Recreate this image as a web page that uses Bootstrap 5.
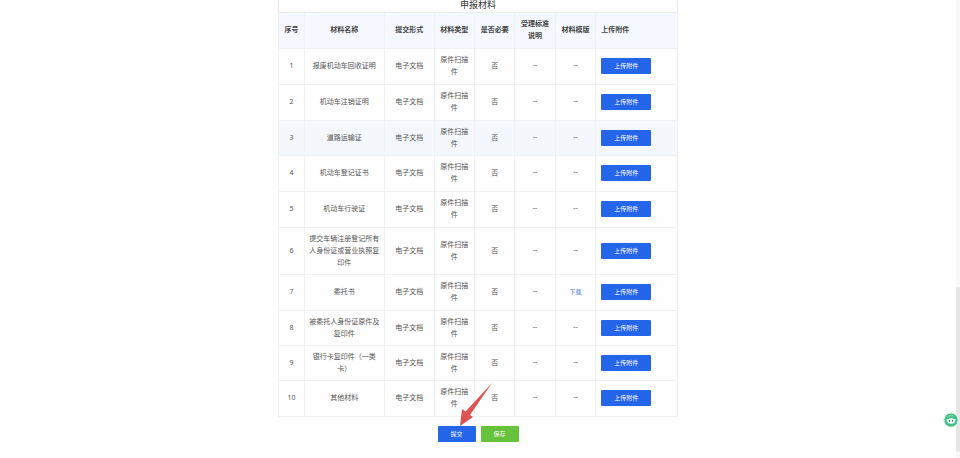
<!DOCTYPE html>
<html lang="zh-CN">
<head>
<meta charset="utf-8">
<meta name="viewport" content="width=device-width, initial-scale=1">
<title>申报材料</title>
<link href="https://cdn.jsdelivr.net/npm/bootstrap@5.3.0/dist/css/bootstrap.min.css" rel="stylesheet">
<style>
  body { font-family: "Noto Sans", "Noto Sans CJK SC", sans-serif; font-size: 7px; line-height: 12px; color: #555; background: #fefefe; }
  .sheet { max-width: 400px; }
  .sheet-title { font-family: "Noto Sans CJK SC", sans-serif; font-size: 9px; line-height: 10px; padding-bottom: 2px; color: #333; border: 1px solid #ececec; border-top: 0; }
  .materials { table-layout: fixed; --bs-table-bg: transparent; --bs-table-color: #555; border-color: #f0f1f3; }
  .materials > :not(caption) > * > * { padding: 5px 4px; border-width: 0 1px 1px 0; }
  .materials > * > tr > :first-child { border-left-width: 1px; }
  .materials tr { height: 36px; border-width: 0; }
  .materials thead tr, .materials tbody tr:nth-child(3n), .materials tbody tr:nth-child(8) { height: 35px; }
  .materials thead th { background: #f5f9ff; color: #444; padding-left: 2px; padding-right: 2px; }
  .materials tr.is-hover td { background: #f4f8fd; }
  .c-no { width: 6.5%; } .c-name { width: 20%; } .c-form { width: 12.5%; } .c-std { width: 10.125%; }
  .none-mark { font-family: Roboto, sans-serif; font-size: 8px; }
  .btn-mini { --bs-btn-font-size: 6px; --bs-btn-line-height: 12px; --bs-btn-padding-x: 12px; --bs-btn-padding-y: 2px; --bs-btn-border-width: 0; --bs-btn-border-radius: 1px; --bs-btn-color: #fff; --bs-btn-hover-color: #fff; display: block; line-height: 12px; }
  .btn-blue { --bs-btn-bg: #2465e9; --bs-btn-hover-bg: #1e58d0; }
  .btn-green { --bs-btn-bg: #65c23a; --bs-btn-hover-bg: #57ab31; }
  .btn-upload { width: 50px; }
  .btn-form { width: 38px; }
  .materials > * > tr > .upload-cell { padding-left: 5px; }
  .dl { font-size: 6px; color: #3a70cc; }
  .actions { gap: 5px; padding: 9px 0 16px; }
  .pointer { left: 20px; top: -45px; pointer-events: none; }
  .track { width: 4px; background: #f7f7f7; }
  .thumb { height: 36%; margin-bottom: 6px; background: #e6e6e6; border-radius: 2px; }
  .helper { right: 1px; bottom: 30px; width: 16px; height: 16px; }
</style>
<script src="https://cdn.jsdelivr.net/npm/bootstrap@5.3.0/dist/js/bootstrap.bundle.min.js"></script>
</head>
<body class="d-flex min-vh-100">
<main class="flex-grow-1">
  <div class="sheet mx-auto">
    <h1 class="sheet-title text-center fw-normal m-0">申报材料</h1>
    <table class="materials table text-center align-middle m-0">
      <colgroup><col class="c-no"><col class="c-name"><col class="c-form"><col class="c-std"><col class="c-std"><col class="c-std"><col class="c-std"><col></colgroup>
      <thead class="align-middle">
        <tr><th>序号</th><th>材料名称</th><th>提交形式</th><th>材料类型</th><th>是否必要</th><th>受理标准<br>说明</th><th>材料模版</th><th class="upload-cell text-start">上传附件</th></tr>
      </thead>
      <tbody>
        <tr><td>1</td><td>报废机动车回收证明</td><td>电子文档</td><td>原件扫描件</td><td>否</td><td class="none-mark">--</td><td class="none-mark">--</td><td class="upload-cell"><button type="button" class="btn btn-mini btn-blue btn-upload">上传附件</button></td></tr>
        <tr><td>2</td><td>机动车注销证明</td><td>电子文档</td><td>原件扫描件</td><td>否</td><td class="none-mark">--</td><td class="none-mark">--</td><td class="upload-cell"><button type="button" class="btn btn-mini btn-blue btn-upload">上传附件</button></td></tr>
        <tr class="is-hover"><td>3</td><td>道路运输证</td><td>电子文档</td><td>原件扫描件</td><td>否</td><td class="none-mark">--</td><td class="none-mark">--</td><td class="upload-cell"><button type="button" class="btn btn-mini btn-blue btn-upload">上传附件</button></td></tr>
        <tr><td>4</td><td>机动车登记证书</td><td>电子文档</td><td>原件扫描件</td><td>否</td><td class="none-mark">--</td><td class="none-mark">--</td><td class="upload-cell"><button type="button" class="btn btn-mini btn-blue btn-upload">上传附件</button></td></tr>
        <tr><td>5</td><td>机动车行驶证</td><td>电子文档</td><td>原件扫描件</td><td>否</td><td class="none-mark">--</td><td class="none-mark">--</td><td class="upload-cell"><button type="button" class="btn btn-mini btn-blue btn-upload">上传附件</button></td></tr>
        <tr><td>6</td><td>提交车辆注册登记所有人身份证或营业执照复印件</td><td>电子文档</td><td>原件扫描件</td><td>否</td><td class="none-mark">--</td><td class="none-mark">--</td><td class="upload-cell"><button type="button" class="btn btn-mini btn-blue btn-upload">上传附件</button></td></tr>
        <tr><td>7</td><td>委托书</td><td>电子文档</td><td>原件扫描件</td><td>否</td><td class="none-mark">--</td><td><a class="dl text-decoration-none" href="#">下载</a></td><td class="upload-cell"><button type="button" class="btn btn-mini btn-blue btn-upload">上传附件</button></td></tr>
        <tr><td>8</td><td>被委托人身份证原件及复印件</td><td>电子文档</td><td>原件扫描件</td><td>否</td><td class="none-mark">--</td><td class="none-mark">--</td><td class="upload-cell"><button type="button" class="btn btn-mini btn-blue btn-upload">上传附件</button></td></tr>
        <tr><td>9</td><td>银行卡复印件（一类卡）</td><td>电子文档</td><td>原件扫描件</td><td>否</td><td class="none-mark">--</td><td class="none-mark">--</td><td class="upload-cell"><button type="button" class="btn btn-mini btn-blue btn-upload">上传附件</button></td></tr>
        <tr><td>10</td><td>其他材料</td><td>电子文档</td><td>原件扫描件</td><td>否</td><td class="none-mark">--</td><td class="none-mark">--</td><td class="upload-cell"><button type="button" class="btn btn-mini btn-blue btn-upload">上传附件</button></td></tr>
      </tbody>
    </table>
    <div class="actions d-flex justify-content-center">
      <div class="position-relative">
        <button type="submit" class="btn btn-mini btn-blue btn-form">提交</button>
        <svg class="pointer position-absolute" width="36" height="46" viewBox="0 0 36 46" aria-hidden="true"><path d="M34 2 12 34 15 36 2 45 4 28 7.500 30.500Z" fill="#dc5353"/></svg>
      </div>
      <button type="button" class="btn btn-mini btn-green btn-form">保存</button>
    </div>
  </div>
</main>
<div class="track d-flex flex-column justify-content-end" aria-hidden="true"><div class="thumb"></div></div>
<button type="button" class="helper btn p-0 border-0 position-fixed d-flex" aria-label="助手">
  <svg width="16" height="16" viewBox="0 0 16 16"><circle cx="8" cy="8" r="8" fill="#dff6ea"/><circle cx="8" cy="8" r="6.600" fill="#45bd8a"/><path d="M3.500 7.500Q6 7.400 8 5.800 10 7 12.600 7.200 12.500 11.800 8 11.800 3.800 11.700 3.500 7.500Z" fill="#f2fff9"/><path d="M4 5Q7 2.500 10.500 4" fill="none" stroke="#8de0bb" stroke-width="1"/><path d="M6.500 8v1.800M9.500 8v1.800" stroke="#278a61" stroke-width="1.200"/></svg>
</button>
</body>
</html>
